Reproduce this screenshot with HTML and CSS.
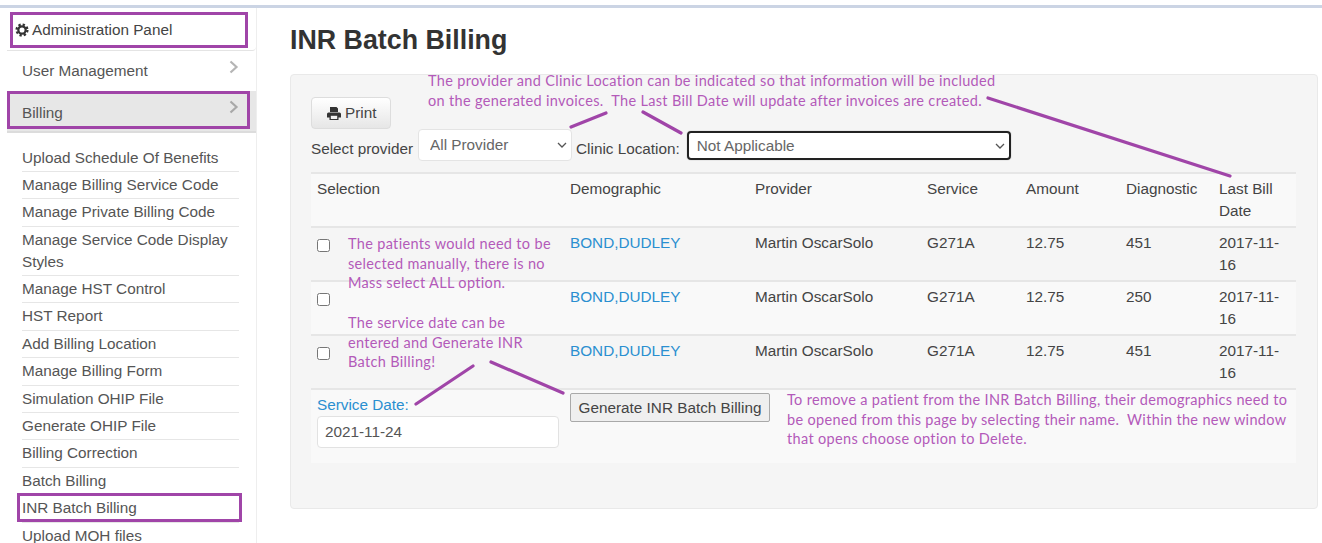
FILE: index.html
```html
<!DOCTYPE html>
<html lang="en">
<head>
    <meta charset="UTF-8">
    <meta name="viewport" content="width=device-width, initial-scale=1.0">
    <title>INR Batch Billing</title>
    <link rel="stylesheet" href="styles.css">
</head>
<body>
    <div class="page">
        <aside class="sidebar">
            <div class="side-head">
                <svg class="gear" viewBox="0 0 16 16"><circle cx="8" cy="8" r="4.2" fill="none" stroke="#333" stroke-width="2.6"/><circle cx="8" cy="8" r="6.2" fill="none" stroke="#333" stroke-width="2.6" stroke-dasharray="2.6 2.27"/></svg>
                Administration Panel
            </div>
            <div class="side-item">User Management
                <svg class="chev" viewBox="0 0 10 14"><path d="M2 1.5 8 7l-6 5.500" fill="none" stroke="#b5b5b5" stroke-width="2.200"/></svg>
            </div>
            <div class="side-item active">Billing
                <svg class="chev" viewBox="0 0 10 14"><path d="M2 1.5 8 7l-6 5.500" fill="none" stroke="#a8a8a8" stroke-width="2.200"/></svg>
            </div>
            <ul class="side-list">
                <li>Upload Schedule Of Benefits</li>
                <li>Manage Billing Service Code</li>
                <li>Manage Private Billing Code</li>
                <li>Manage Service Code Display Styles</li>
                <li>Manage HST Control</li>
                <li>HST Report</li>
                <li>Add Billing Location</li>
                <li>Manage Billing Form</li>
                <li>Simulation OHIP File</li>
                <li>Generate OHIP File</li>
                <li>Billing Correction</li>
                <li>Batch Billing</li>
                <li>INR Batch Billing</li>
                <li>Upload MOH files</li>
            </ul>
        </aside>

        <main class="content">
            <h1>INR Batch Billing</h1>
            <div class="panel">
                <button class="btn-print">
                    <svg class="printer" viewBox="0 0 14 13"><path d="M3 0h6.500L11 1.500V5H3zM1.500 5.500h11A1.500 1.500 0 0 1 14 7v3.500h-2.500V13h-9v-2.500H0V7a1.500 1.500 0 0 1 1.500-1.500z" fill="#333"/><path d="M3.800 8.800h6.400v3.200H3.800z" fill="#f0f0f0"/></svg>
                    Print
                </button>
                <div class="filters">
                    <label>Select provider</label>
                    <select class="sel-provider"><option>All Provider</option></select>
                    <label class="lbl-clinic">Clinic Location:</label>
                    <select class="sel-clinic"><option>Not Applicable</option></select>
                </div>
                <table class="billing">
                    <colgroup>
                        <col class="c-sel"><col class="c-demo"><col class="c-prov"><col class="c-serv"><col class="c-amt"><col class="c-diag"><col>
                    </colgroup>
                    <thead>
                        <tr>
                            <th>Selection</th><th>Demographic</th><th>Provider</th><th>Service</th><th>Amount</th><th>Diagnostic</th><th>Last Bill Date</th>
                        </tr>
                    </thead>
                    <tbody>
                        <tr>
                            <td><input type="checkbox"></td><td><a href="#">BOND,DUDLEY</a></td><td>Martin OscarSolo</td><td>G271A</td><td>12.75</td><td>451</td><td>2017-11-16</td>
                        </tr>
                        <tr>
                            <td><input type="checkbox"></td><td><a href="#">BOND,DUDLEY</a></td><td>Martin OscarSolo</td><td>G271A</td><td>12.75</td><td>250</td><td>2017-11-16</td>
                        </tr>
                        <tr>
                            <td><input type="checkbox"></td><td><a href="#">BOND,DUDLEY</a></td><td>Martin OscarSolo</td><td>G271A</td><td>12.75</td><td>451</td><td>2017-11-16</td>
                        </tr>
                        <tr class="foot-row">
                            <td>
                                <label class="lbl-date">Service Date:</label>
                                <input class="date-input" value="2021-11-24">
                            </td>
                            <td colspan="6"><button class="btn-generate">Generate INR Batch Billing</button></td>
                        </tr>
                    </tbody>
                </table>
            </div>
        </main>

        <!-- annotations drawn on top of the screenshot -->
        <p class="note note-top">The provider and Clinic Location can be indicated so that information will be included<br>on the generated invoices.&nbsp; The Last Bill Date will update after invoices are created.</p>
        <p class="note note-left">The patients would need to be<br>selected manually, there is no<br>Mass select ALL option.<br><br>The service date can be<br>entered and Generate INR<br>Batch Billing!</p>
        <p class="note note-right">To remove a patient from the INR Batch Billing, their demographics need to<br>be opened from this page by selecting their name.&nbsp; Within the new window<br>that opens choose option to Delete.</p>
        <div class="mark mark-admin"></div>
        <div class="mark mark-billing"></div>
        <div class="mark mark-inr"></div>
        <svg class="arrows" viewBox="0 0 1322 543">
            <path d="M571 127 606 113M643 112 681 133M988 98 1230 176M416 404 473 366M491 362 563 393"/>
        </svg>
    </div>
</body>
</html>
```

FILE: styles.css
```css
* { box-sizing: border-box; }

body {
    margin: 0;
    height: 100vh;
    overflow: hidden;
    background: #fff;
    color: #444;
    font-family: "Liberation Sans", Arial, sans-serif;
    font-size: 15.3px;
    line-height: 22px;
}

.page {
    position: relative;
    display: flex;
    height: 543px;
    margin-top: 5px;
    border-top: 3px solid #cbd4e4;
    overflow: hidden;
}

/* sidebar */
.sidebar {
    flex: none;
    width: 250px;
    margin-left: 7px;
    border-right: 1px solid #eee;
    color: #555;
}
.side-head {
    display: flex;
    align-items: center;
    gap: 3px;
    height: 43px;
    padding: 1px 0 0 8px;
    border-bottom: 1px solid #e4e4e4;
    border-radius: 0 0 4px 0;
    color: #444;
}
.gear { width: 14px; height: 14px; }
.side-item {
    display: flex;
    justify-content: space-between;
    height: 40px;
    padding: 9px 17px 0 15px;
}
.side-item.active {
    height: 42px;
    padding-top: 11px;
    background: #e7e7e7;
    border-bottom: 2px solid #dcdcdc;
}
.chev { width: 11px; height: 14px; margin-top: 0; }
.side-item.active .chev { margin-top: -2px; }
.side-list {
    list-style: none;
    margin: 0 17px 0 15px;
    padding: 11.5px 0 0;
}
.side-list li {
    padding: 2px 0 2.4px;
    border-bottom: 1px solid #e6e6e6;
}

/* main */
.content {
    flex: 1;
    min-width: 0;
    padding: 0 4px 0 33px;
}
h1 {
    margin: 15px 0 17px;
    font-size: 26.800px;
    line-height: 34px;
    font-weight: bold;
    color: #333;
}
.panel {
    height: 435px;
    padding: 22px 20px 0;
    background: #f5f5f5;
    border: 1px solid #e9e9e9;
    border-radius: 4px;
}
.btn-print {
    display: flex;
    align-items: center;
    gap: 4px;
    width: 80px;
    height: 32px;
    padding: 0 0 0 15px;
    font: inherit;
    color: #444;
    background: linear-gradient(#fff, #e6e6e6);
    border: 1px solid #ddd;
    border-radius: 4px;
}
.printer { width: 14px; height: 13px; }
.filters {
    display: flex;
    align-items: flex-start;
    height: 34px;
}
.filters label { margin-top: 9px; }
select {
    appearance: none;
    font: inherit;
    color: #666;
    background-color: #fff;
    background-image: url("data:image/svg+xml,%3Csvg xmlns='http://www.w3.org/2000/svg' viewBox='0 0 10 6'%3E%3Cpath d='M1 1l4 4 4-4' fill='none' stroke='%23555' stroke-width='1.300'/%3E%3C/svg%3E");
    background-repeat: no-repeat;
    background-size: 10px 6px;
    background-position: right 4px center;
    border-radius: 4px;
}
.sel-provider {
    width: 154px;
    height: 32px;
    margin-left: 5px;
    padding-left: 11px;
    border: 1px solid #e4e4e4;
}
.lbl-clinic { margin-left: 4px; }
.sel-clinic {
    width: 324px;
    height: 29px;
    margin: 2px 0 0 7px;
    padding-left: 8px;
    border: 2px solid #222;
    box-shadow: 0 0 0 1px #e8e8e8;
}

.billing {
    width: 985px;
    margin-top: 9px;
    border-collapse: collapse;
    table-layout: fixed;
}
.c-sel { width: 253px; }
.c-demo { width: 185px; }
.c-prov { width: 172px; }
.c-serv { width: 99px; }
.c-amt { width: 100px; }
.c-diag { width: 93px; }
.billing th, .billing td {
    height: 54px;
    padding: 4px 6px;
    vertical-align: top;
    text-align: left;
    font-weight: normal;
    border-top: 2px solid #e6e6e6;
}
.billing thead tr, .billing tbody tr:nth-child(even), .billing .foot-row { background: #f9f9f9; }
.billing a { color: #2a8fd0; text-decoration: none; }
.billing input[type=checkbox] {
    width: 13px;
    height: 13px;
    margin: 7px 0 0;
}
.billing .foot-row td { height: 74px; }
.lbl-date { display: block; color: #2a8fd0; }
.date-input {
    display: block;
    width: 242px;
    height: 32px;
    margin-top: 0;
    padding: 0 7px;
    font: inherit;
    color: #555;
    background: #fff;
    border: 1px solid #e2e2e2;
    border-radius: 4px;
}
.btn-generate {
    display: block;
    height: 29px;
    width: 200px;
    margin-top: -1px;
    padding: 0;
    font: inherit;
    color: #444;
    background: #efefef;
    border: 1px solid #a9a9a9;
    border-radius: 2px;
}

/* annotations */
.note {
    position: absolute;
    margin: 0;
    font-family: Lato, "Open Sans", sans-serif;
    font-size: 14.5px;
    line-height: 19.7px;
    letter-spacing: 0.33px;
    color: #b35ab9;
    white-space: nowrap;
}
.note-top { left: 428px; top: 63px; }
.note-left { left: 348px; top: 226px; }
.note-right { left: 787px; top: 382px; }
.mark {
    position: absolute;
    border: 3px solid #a045a8;
}
.mark-admin { left: 10px; top: 4px; width: 238px; height: 36px; }
.mark-billing { left: 7px; top: 83px; width: 243px; height: 38px; }
.mark-inr { left: 17px; top: 485px; width: 225px; height: 29px; }
.arrows {
    position: absolute;
    left: 0;
    top: -8px;
    width: 1322px;
    height: 543px;
    pointer-events: none;
}
.arrows path {
    fill: none;
    stroke: #a045a8;
    stroke-width: 3.200;
    stroke-linecap: round;
}
```
